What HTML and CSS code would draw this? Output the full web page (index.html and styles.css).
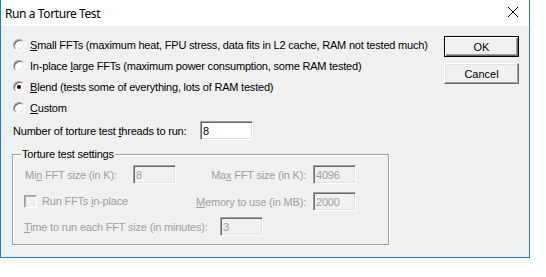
FILE: index.html
```html
<!DOCTYPE html>
<html lang="en">
<head>
  <meta charset="UTF-8" />
  <title>Run a Torture Test</title>
  <link rel="stylesheet" href="styles.css">
</head>
<body>
  <div class="window">
    <div class="titlebar">
      <span class="title">Run a Torture Test</span>
      <svg class="close" width="10" height="10" viewBox="0 0 10 10">
        <path d="M0 0 L10 10 M10 0 L0 10" stroke="#000" stroke-width="1" fill="none"/>
      </svg>
    </div>

    <div class="client">
      <div class="main">
        <div class="option"><span class="radio"></span><span><u>S</u>mall FFTs (maximum heat, FPU stress, data fits in L2 cache, RAM not tested much)</span></div>
        <div class="option"><span class="radio"></span><span>In-place <u>l</u>arge FFTs (maximum power consumption, some RAM tested)</span></div>
        <div class="option"><span class="radio checked"></span><span><u>B</u>lend (tests some of everything, lots of RAM tested)</span></div>
        <div class="option"><span class="radio"></span><span><u>C</u>ustom</span></div>

        <div class="threads">
          <span class="threads-label">Number of torture test <u>t</u>hreads to run:</span>
          <input class="field threads-field" type="text" value="8">
        </div>

        <fieldset class="group">
          <legend>Torture test settings</legend>
          <div class="grow">
            <span class="cell-a">Mi<u>n</u> FFT size (in K):</span>
            <input class="field small" type="text" value="8" disabled>
            <span class="cell-c">Ma<u>x</u> FFT size (in K):</span>
            <input class="field small" type="text" value="4096" disabled>
          </div>
          <div class="grow second">
            <span class="cell-a"><span class="check"></span>Run FFTs <u>i</u>n-place</span>
            <span class="cell-b"></span>
            <span class="cell-c"><u>M</u>emory to use (in MB):</span>
            <input class="field small" type="text" value="2000" disabled>
          </div>
          <div class="grow third">
            <span class="time-label"><u>T</u>ime to run each FFT size (in minutes):</span>
            <input class="field small" type="text" value="3" disabled>
          </div>
        </fieldset>
      </div>

      <div class="buttons">
        <button class="btn default">OK</button>
        <button class="btn">Cancel</button>
      </div>
    </div>
  </div>
</body>
</html>
```

FILE: styles.css
```css
body {
  margin: 0;
  background: #fff;
  font-family: "Liberation Sans", Arial, sans-serif;
  font-size: 11px;
  letter-spacing: -0.2px;
  color: #000;
}

.window {
  width: 530px;
  height: 258px;
  box-sizing: border-box;
  border: 1px solid #1a7fd4;
  border-top: none;
  display: flex;
  flex-direction: column;
}

.titlebar {
  height: 26px;
  background: #fff;
  display: flex;
  align-items: center;
  justify-content: space-between;
}

.title {
  font-family: "Noto Sans", "Open Sans", sans-serif;
  font-size: 12px;
  letter-spacing: -0.4px;
  padding-left: 4px;
  color: #000;
}

.close {
  margin-right: 11px;
  margin-top: -2px;
}

.client {
  flex: 1;
  background: #f0f0f0;
  display: flex;
  padding: 8px 10px 0 12px;
}

.main {
  flex: 1;
}

u {
  text-decoration: underline;
  text-underline-offset: 1px;
}

.option {
  height: 21px;
  display: flex;
  align-items: center;
}

.radio {
  width: 12px;
  height: 12px;
  box-sizing: border-box;
  border-radius: 50%;
  background: #fff;
  border: 1px solid;
  border-color: #a0a0a0 #fff #fff #a0a0a0;
  box-shadow: inset 1px 1px 0 #696969, inset -1px -1px 0 #e3e3e3;
  margin-right: 5px;
  position: relative;
}

.radio.checked::after {
  content: "";
  position: absolute;
  left: 3px;
  top: 3px;
  width: 4px;
  height: 4px;
  border-radius: 50%;
  background: #000;
}

.threads {
  display: flex;
  align-items: center;
  margin-top: 3px;
}

.threads-label {
  width: 187px;
}

.field {
  height: 19px;
  box-sizing: border-box;
  border: 1px solid;
  border-color: #a0a0a0 #fff #fff #a0a0a0;
  box-shadow: inset 1px 1px 0 #696969, inset -1px -1px 0 #e3e3e3;
  background: #fff;
  font-family: "Liberation Sans", Arial, sans-serif;
  font-size: 11px;
  letter-spacing: -0.2px;
  padding: 0 2px;
  margin: 0;
  outline: none;
  color: #000;
}

.threads-field {
  width: 53px;
}

.field.small {
  width: 43px;
}

.field:disabled {
  background: #f0f0f0;
  color: #a0a0a0;
}

.group {
  width: 377px;
  box-sizing: border-box;
  margin: 8px 0 0 -1px;
  padding: 4px 0 8px 11px;
  border: 1px solid #a0a0a0;
  box-shadow: 1px 1px 0 #fff, inset 1px 1px 0 #fff;
  color: #a0a0a0;
}

.group legend {
  color: #000;
  line-height: 13px;
  padding: 0 1px;
  margin-left: -3px;
  background: #f0f0f0;
}

.grow {
  display: flex;
  align-items: center;
  height: 19px;
}

.grow.second {
  margin-top: 8px;
}

.grow.third {
  margin-top: 6px;
}

.cell-a {
  width: 109px;
  padding-left: 1px;
  box-sizing: border-box;
  white-space: nowrap;
}

.cell-b {
  width: 43px;
}

.cell-c {
  width: 137px;
  padding-right: 7px;
  box-sizing: border-box;
  text-align: right;
}

.check {
  display: inline-block;
  vertical-align: -3px;
  width: 13px;
  height: 13px;
  box-sizing: border-box;
  border: 1px solid;
  border-color: #a0a0a0 #fff #fff #a0a0a0;
  box-shadow: inset 1px 1px 0 #b4b4b4;
  background: #f0f0f0;
  margin: 0 5px 0 -1px;
}

.time-label {
  width: 196px;
}

.buttons {
  width: 75px;
  margin-top: 2px;
  display: flex;
  flex-direction: column;
}

.btn {
  width: 75px;
  height: 21px;
  box-sizing: border-box;
  margin: 0 0 6px 0;
  padding: 0;
  font-family: "Liberation Sans", Arial, sans-serif;
  font-size: 11px;
  color: #000;
  background: #f0f0f0;
  border: 1px solid;
  border-color: #fff #696969 #696969 #fff;
  box-shadow: inset -1px -1px 0 #a0a0a0, inset 1px 1px 0 #e3e3e3;
}

.btn.default {
  border: 1px solid #000;
  box-shadow: inset 1px 1px 0 #fff, inset -1px -1px 0 #696969, inset -2px -2px 0 #a0a0a0;
}
```
